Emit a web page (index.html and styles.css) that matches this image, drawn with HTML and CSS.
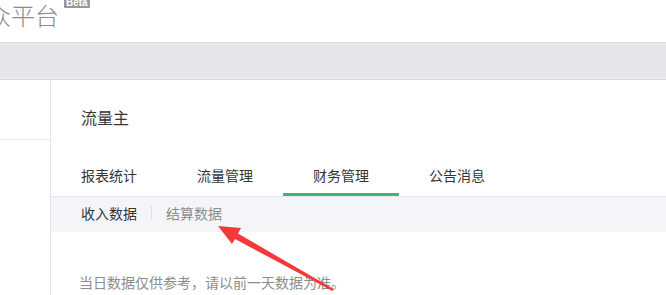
FILE: index.html
```html
<!DOCTYPE html>
<html lang="zh-CN">
<head>
    <meta charset="UTF-8">
    <meta name="viewport" content="width=device-width, initial-scale=1.0">
    <title>流量主</title>
    <link rel="stylesheet" href="styles.css">
</head>

<body>
    <div class="header">
        <h1 class="logo">公众平台</h1>
        <span class="beta">Beta</span>
    </div>
    <div class="banner"></div>

    <div class="layout">
        <div class="sidebar">
            <div class="side-item"></div>
        </div>
        <div class="main">
            <h2 class="page-title">流量主</h2>
            <ul class="tabs">
                <li class="tab">报表统计</li>
                <li class="tab">流量管理</li>
                <li class="tab active">财务管理</li>
                <li class="tab">公告消息</li>
            </ul>
            <div class="subnav">
                <span class="sub-item current">收入数据</span>
                <span class="sub-sep"></span>
                <span class="sub-item">结算数据</span>
            </div>
            <p class="tips">当日数据仅供参考，请以前一天数据为准。</p>
        </div>
    </div>

    <svg class="arrow" width="666" height="295" viewBox="0 0 666 295">
        <polygon points="218,226 241,228 238,233.6 333.6,289 332.4,291 235,239 232,244" fill="#f33a3a"/>
    </svg>
</body>
</html>
```

FILE: styles.css
```css
*, *:before, *:after {
    box-sizing: border-box;
}

body {
    margin: 0;
    background-color: #fff;
    font-family: "Noto Sans CJK SC", "Noto Sans", sans-serif;
    color: #353535;
    overflow: hidden;
}

.header {
    display: flex;
    align-items: flex-start;
    height: 42px;
    overflow: hidden;
}

.logo {
    margin: 0 0 0 -37px;
    font-size: 24px;
    font-weight: 300;
    line-height: 30px;
    color: #8c8c8c;
    white-space: nowrap;
}

.beta {
    margin: -3px 0 0 5px;
    padding: 0 2px;
    background-color: #999;
    color: #fff;
    font-family: "Liberation Sans", sans-serif;
    font-size: 10px;
    font-weight: bold;
    line-height: 11px;
    border-radius: 1px;
}

.banner {
    height: 38px;
    background-color: #e6e6ea;
    border-top: 1px solid #d6d6da;
    border-bottom: 1px solid #d6d6da;
    box-shadow: inset 0 2px 0 #ebebef, inset 0 -2px 0 #ebebef;
}

.layout {
    display: flex;
}

.sidebar {
    width: 51px;
    flex-shrink: 0;
    border-right: 1px solid #e4e4e8;
    height: 220px;
}

.side-item {
    height: 60px;
    border-bottom: 1px solid #e7e7eb;
}

.main {
    flex: 1;
    padding-top: 25px;
}

.page-title {
    margin: 0 0 23px 30px;
    font-size: 16px;
    font-weight: normal;
    line-height: 24px;
}

.tabs {
    display: flex;
    margin: 0;
    padding: 0;
    list-style: none;
    border-bottom: 1px solid #e7e7eb;
}

.tab {
    width: 116px;
    padding-top: 5px;
    text-align: center;
    font-size: 14px;
    line-height: 36px;
    border-bottom: 3px solid transparent;
}

.tab.active {
    border-bottom-color: #44b27a;
}

.subnav {
    display: flex;
    align-items: center;
    height: 35px;
    padding-left: 30px;
    padding-bottom: 3px;
    background-color: #f4f5f9;
    font-size: 14px;
}

.sub-item {
    color: #8d8d8d;
}

.sub-item.current {
    color: #353535;
}

.sub-sep {
    width: 1px;
    height: 14px;
    margin: 0 14px;
    background-color: #e0e0e4;
}

.tips {
    margin: 39px 0 0 28px;
    font-size: 14px;
    line-height: 22px;
    color: #8d8d8d;
}

.arrow {
    position: absolute;
    top: 0;
    left: 0;
}
```
